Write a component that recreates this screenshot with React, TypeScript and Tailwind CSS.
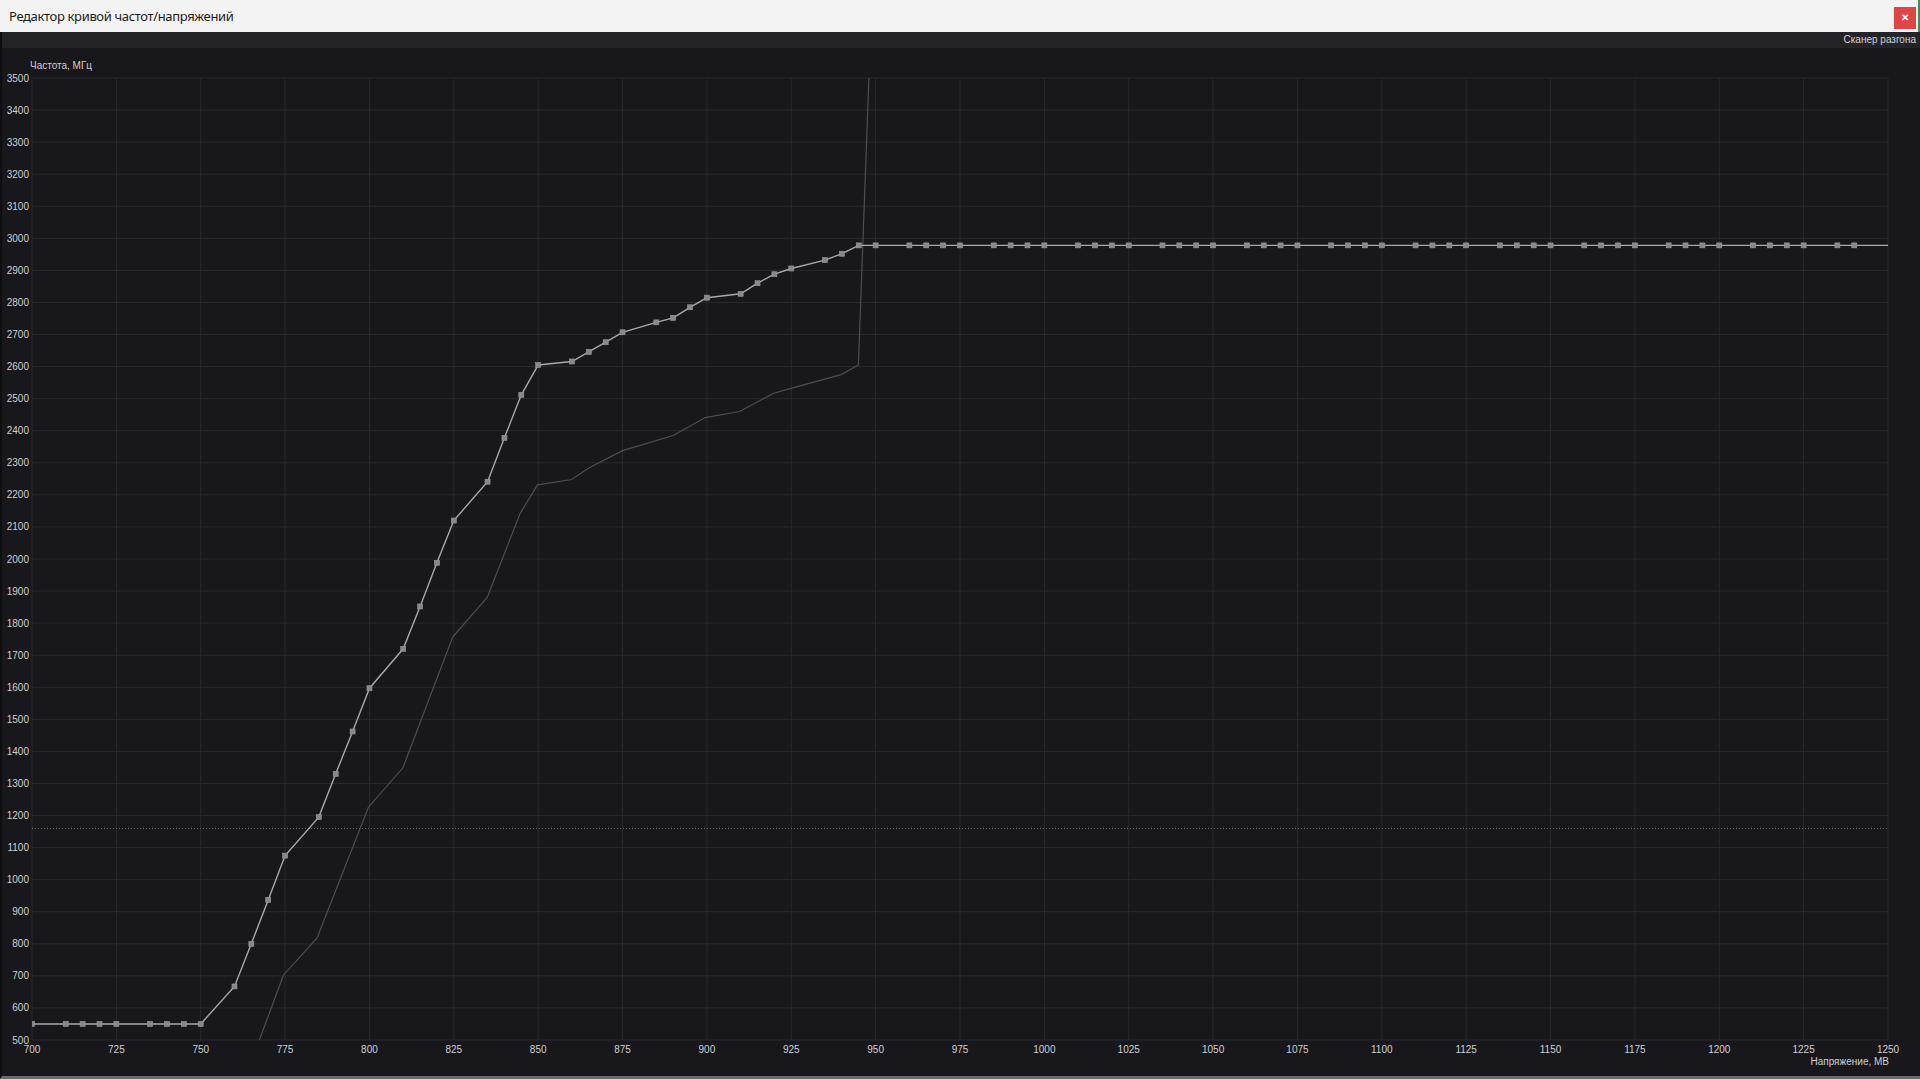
import React from 'react';

// plot bounds in page pixels
const PX0 = 32;
const PX1 = 1888;
const PY0 = 78;
const PY1 = 1040;

const xOf = (v: number) => PX0 + ((v - 700) * (PX1 - PX0)) / 550;
const yOf = (f: number) => PY1 - ((f - 500) * (PY1 - PY0)) / 3000;

const mainCurve: [number, number][] = [
  [700, 550], [710, 550], [715, 550], [720, 550], [725, 550], [735, 550], [740, 550], [745, 550], [750, 550],
  [760, 667], [765, 800], [770, 937], [775, 1075], [785, 1195], [790, 1330], [795, 1462], [800, 1597],
  [810, 1720], [815, 1852], [820, 1988], [825, 2120], [835, 2241], [840, 2378], [845, 2512], [850, 2605],
  [860, 2616], [865, 2646], [870, 2676], [875, 2707], [885, 2738], [890, 2752], [895, 2785], [900, 2815],
  [910, 2827], [915, 2860], [920, 2888], [925, 2906], [935, 2932], [940, 2952], [945, 2978],
];

for (let v = 950; v <= 1240; v += 5) {
  if (v % 25 === 5) continue;
  mainCurve.push([v, 2978]);
}

// line runs on to the right edge, no marker there
const mainLine: [number, number][] = [...mainCurve, [1250, 2978]];

const refCurve: [number, number][] = [
  [767.4, 500], [774.5, 702], [784.5, 818], [799.7, 1226], [809.9, 1349], [824.7, 1757], [834.9, 1880],
  [844.7, 2143], [849.8, 2231], [859.9, 2248], [865, 2284], [875, 2338], [890, 2385], [899.5, 2441],
  [909.7, 2460], [919.8, 2517], [924.9, 2532], [939.8, 2575], [944.9, 2605], [948, 3500],
];

const toPath = (pts: [number, number][]) =>
  pts.map(([v, f], i) => `${i === 0 ? 'M' : 'L'}${xOf(v).toFixed(1)} ${yOf(f).toFixed(1)}`).join(' ');

const xTicks = Array.from({ length: 23 }, (_, i) => 700 + i * 25);
const yTicks = Array.from({ length: 31 }, (_, i) => 500 + i * 100);

function CurveChart() {
  return (
    <svg width={1918} height={1028} className="block" style={{ fontFamily: '"Liberation Sans", Arial, sans-serif' }}>
      <defs>
        <clipPath id="plot">
          <rect x={PX0} y={PY0} width={PX1 - PX0} height={PY1 - PY0} />
        </clipPath>
      </defs>
      <g transform="translate(-2,-48)">
        {/* grid */}
        {yTicks.map((f) => (
          <line key={`h${f}`} x1={PX0} x2={PX1} y1={yOf(f)} y2={yOf(f)} stroke="#2a2930" strokeWidth={1} />
        ))}
        {xTicks.map((v) => (
          <line key={`v${v}`} x1={xOf(v)} x2={xOf(v)} y1={PY0} y2={PY1} stroke="#2a2930" strokeWidth={1} />
        ))}

        {/* dotted limit line */}
        <line x1={PX0} x2={PX1} y1={828.5} y2={828.5} stroke="#66656b" strokeWidth={1} strokeDasharray="1 2" />

        <g clipPath="url(#plot)">
          <path d={toPath(refCurve)} fill="none" stroke="#4f4e54" strokeWidth={1.2} />
          <path d={toPath(mainLine)} fill="none" stroke="#a9a9ab" strokeWidth={1.4} />
          {mainCurve.map(([v, f]) => (
            <rect
              key={v}
              x={xOf(v) - 2.5}
              y={yOf(f) - 2.5}
              width={5}
              height={5}
              fill="#88878b"
              stroke="#9c9c9f"
              strokeWidth={0.6}
            />
          ))}
        </g>

        {/* y axis labels */}
        {yTicks.map((f) => (
          <text key={`yl${f}`} x={29} y={yOf(f) + 3.5} textAnchor="end" fontSize={10} fill="#cfcfd2">
            {f}
          </text>
        ))}
        {/* x axis labels */}
        {xTicks.map((v) => (
          <text key={`xl${v}`} x={xOf(v)} y={1053} textAnchor="middle" fontSize={10} fill="#cfcfd2">
            {v}
          </text>
        ))}

        <text x={30} y={68.5} fontSize={10} fill="#cfcfd2">
          Частота, МГц
        </text>
        <text x={1889} y={1065} textAnchor="end" fontSize={10} fill="#cfcfd2">
          Напряжение, МВ
        </text>
      </g>
    </svg>
  );
}

export default function App() {
  return (
    <div className="w-[1920px] h-[1079px] flex flex-col overflow-hidden bg-[#5e5e5e] font-['Liberation_Sans',Arial,sans-serif]">
      {/* Title bar */}
      <div className="h-8 shrink-0 bg-[#f3f3f3] flex items-start justify-between pl-[9px] pr-[2px] border-r-2 border-[#3f8a55]">
        <span className="mt-[7px] text-[13px] leading-[18px] text-[#1b1b1b] font-['Noto_Sans',sans-serif] tracking-[-0.35px]">
          Редактор кривой частот/напряжений
        </span>
        <button className="mt-[7px] w-[22px] h-[22px] bg-[#e04646] text-white text-[10px] font-bold leading-none flex items-center justify-center">
          ✕
        </button>
      </div>

      {/* Toolbar */}
      <div className="h-4 shrink-0 bg-[#242328] flex items-center justify-end pr-[4px] border-l-2 border-[#0e0e10]">
        <span className="text-[10px] leading-none text-[#d2d2d5]">Сканер разгона</span>
      </div>

      {/* Chart */}
      <div className="flex-1 bg-[#18171c] border-l-2 border-[#0e0e10] border-b-[3px] border-b-[#6a6a6a] overflow-hidden">
        <CurveChart />
      </div>
    </div>
  );
}
